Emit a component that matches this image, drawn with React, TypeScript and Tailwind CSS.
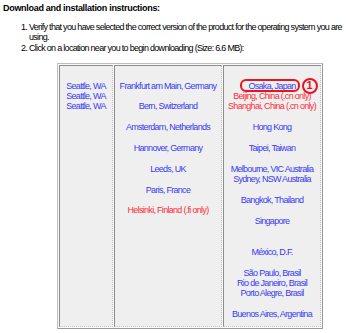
const BLUE = "text-[#3a3af5]";
const RED = "text-[#ff2d3c]";

type Line = { t: string; red?: boolean; mark?: boolean } | null;

const col1: Line[] = [{ t: "Seattle, WA" }, { t: "Seattle, WA" }, { t: "Seattle, WA" }];

const col2: Line[] = [
  { t: "Frankfurt am Main, Germany" },
  null,
  { t: "Bern, Switzerland" },
  null,
  { t: "Amsterdam, Netherlands" },
  null,
  { t: "Hannover, Germany" },
  null,
  { t: "Leeds, UK" },
  null,
  { t: "Paris, France" },
  null,
  { t: "Helsinki, Finland (.fi only)", red: true },
];

const col3: Line[] = [
  { t: "Osaka, Japan", mark: true },
  { t: "Beijing, China (.cn only)", red: true },
  { t: "Shanghai, China (.cn only)", red: true },
  null,
  { t: "Hong Kong" },
  null,
  { t: "Taipei, Taiwan" },
  null,
  { t: "Melbourne, VIC Australia" },
  { t: "Sydney, NSW Australia" },
  null,
  { t: "Bangkok, Thailand" },
  null,
  { t: "Singapore" },
  null,
  null,
  { t: "México, D.F." },
  null,
  { t: "São Paulo, Brasil" },
  { t: "Rio de Janeiro, Brasil" },
  { t: "Porto Alegre, Brasil" },
  null,
  { t: "Buenos Aires, Argentina" },
];

function Cell({ lines, width }: { lines: Line[]; width: string }) {
  return (
    <div
      className={`${width} shrink-0 bg-[#efefef] border-l border-t border-[#8c8c8c] border-r border-b border-r-[#c6c6c6] border-b-[#c6c6c6] border-r-dotted border-b-dotted pt-[14.8px] pb-[6px]`}
      style={{ borderRightStyle: "dotted", borderBottomStyle: "dotted" }}
    >
      {lines.map((l, i) =>
        l === null ? (
          <div key={i} className="h-[10.4px]" />
        ) : (
          <div
            key={i}
            className={`h-[10.4px] leading-[10.4px] text-center whitespace-nowrap ${l.red ? RED : BLUE}`}
          >
            {l.mark ? (
              <span className="relative inline-block">
                {l.t}
                <span className="absolute -left-[8px] -right-[4px] -top-[2px] -bottom-[1px] border-2 border-[#e8141e] rounded-[6px]" />
                <span className="absolute left-[calc(100%+6px)] -top-[3px] w-[16px] h-[16px] rounded-full border-2 border-[#e8141e] text-[#e8141e] flex items-center justify-center text-[11px] font-bold tracking-normal leading-none">
                  1
                </span>
              </span>
            ) : (
              l.t
            )}
          </div>
        )
      )}
    </div>
  );
}

export default function App() {
  return (
    <div className="w-[350px] h-[333px] bg-white overflow-hidden text-[9px] tracking-[-0.7px] text-black font-['Liberation_Sans',Arial,sans-serif]">
      <div className="pl-[3px] pt-[3px] leading-[10.4px] font-bold tracking-[-0.3px]">
        Download and installation instructions:
      </div>
      <div className="mt-[8.4px] leading-[10.4px]">
        <div className="flex">
          <span className="w-[29px] shrink-0 pl-[21px]">1.</span>
          <span>
            Verify that you have selected the correct version of the product for the operating system you are
            <br />
            using.
          </span>
        </div>
        <div className="flex">
          <span className="w-[29px] shrink-0 pl-[21px]">2.</span>
          <span>Click on a location near you to begin downloading (Size: 6.6 MB):</span>
        </div>
      </div>
      <div className="ml-[57px] mt-[9.8px] w-[266px] flex gap-[1px] p-[1px] bg-[#fafafa] border border-[#bdbdbd] border-r-[#9a9a9a] border-b-[#9a9a9a]">
        <Cell lines={col1} width="w-[54px]" />
        <Cell lines={col2} width="w-[108px]" />
        <Cell lines={col3} width="w-[98px]" />
      </div>
    </div>
  );
}
